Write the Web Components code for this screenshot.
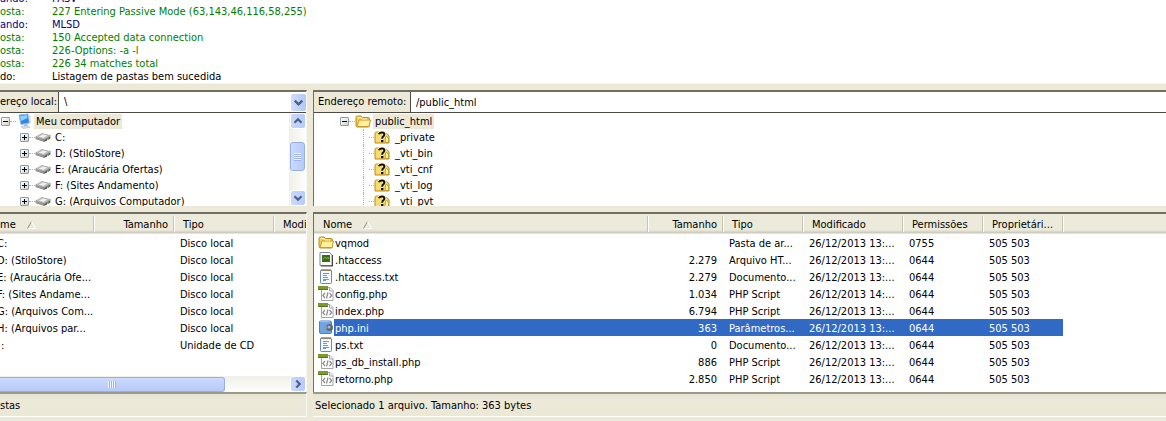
<!DOCTYPE html>
<html lang="pt-BR">
<head>
<meta charset="utf-8">
<title>FTP</title>
<style>
  html, body { margin: 0; height: 100%; }
  body { font: 11px/16px "DejaVu Sans Condensed", "Noto Sans", sans-serif; color: #000; background: #ece9d8; overflow: hidden; }
</style>
</head>
<body>
<ftp-window>
  <ftp-log slot="log">
    <log-line kind="cmd" label="ando:">PASV</log-line>
    <log-line kind="reply" label="osta:">227 Entering Passive Mode (63,143,46,116,58,255)</log-line>
    <log-line kind="cmd" label="ando:">MLSD</log-line>
    <log-line kind="reply" label="osta:">150 Accepted data connection</log-line>
    <log-line kind="reply" label="osta:">226-Options: -a -l</log-line>
    <log-line kind="reply" label="osta:">226 34 matches total</log-line>
    <log-line kind="state" label="do:">Listagem de pastas bem sucedida</log-line>
  </ftp-log>

  <site-pane slot="local" class="local">
    <address-bar slot="address" label="ereço local:" value="\" combo></address-bar>
    <tree-view slot="tree">
      <tree-node icon="computer" toggle="minus" selected>Meu computador</tree-node>
      <tree-node icon="drive" toggle="plus" level="1">C:</tree-node>
      <tree-node icon="drive" toggle="plus" level="1">D: (StiloStore)</tree-node>
      <tree-node icon="drive" toggle="plus" level="1">E: (Araucária Ofertas)</tree-node>
      <tree-node icon="drive" toggle="plus" level="1">F: (Sites Andamento)</tree-node>
      <tree-node icon="drive" toggle="plus" level="1">G: (Arquivos Computador)</tree-node>
      <xp-scrollbar slot="bar"></xp-scrollbar>
    </tree-view>
    <file-table slot="list" source="local"></file-table>
    <xp-scrollbar slot="hbar" horizontal></xp-scrollbar>
    <span slot="status">stas</span>
  </site-pane>

  <site-pane slot="remote" class="remote">
    <address-bar slot="address" label="Endereço remoto:" value="/public_html"></address-bar>
    <tree-view slot="tree" indent>
      <tree-node icon="folder" toggle="minus" selected>public_html</tree-node>
      <tree-node icon="unknown" level="1">_private</tree-node>
      <tree-node icon="unknown" level="1">_vti_bin</tree-node>
      <tree-node icon="unknown" level="1">_vti_cnf</tree-node>
      <tree-node icon="unknown" level="1">_vti_log</tree-node>
      <tree-node icon="unknown" level="1">_vti_pvt</tree-node>
    </tree-view>
    <file-table slot="list" source="remote"></file-table>
    <span slot="status">Selecionado 1 arquivo. Tamanho: 363 bytes</span>
  </site-pane>
</ftp-window>

<script>
const define = (name, html, setup) => {
  const template = document.createElement('template');
  template.innerHTML = html;
  customElements.define(name, class extends HTMLElement {
    constructor() {
      super();
      this.attachShadow({ mode: 'open' }).append(template.content.cloneNode(true));
    }
    connectedCallback() { if (setup) setup(this, this.shadowRoot); }
  });
};

const ICONS = {
  folder: `<path d="M1 4.5Q1 3 2.500 3H6L7.500 4.500H13Q14.500 4.500 14.500 6V12.500Q14.500 14 13 14H2.500Q1 14 1 12.500Z" fill="#f3cf5c" stroke="#b98a1c"/><path d="M2 13.500L4 7H15.500L14 13.500Z" fill="#fff1a0" stroke="#c79a2c"/><path d="M2.500 4.500H6L7 6H12" stroke="#fff3b5" fill="none"/>`,
  unknown: `<path d="M1 4.500Q1 3 2.500 3H6L7.500 4.500H13L15 7V14H1Z" fill="#f7dc6c" stroke="#b98a1c"/><path d="M11.500 6.500L14.500 9V13.500H11Z" fill="#fff3a8" stroke="#c79a2c"/><path d="M5 5.200Q5.500 3 8 3Q10.600 3 10.600 5.200Q10.600 6.700 9.200 7.500Q8.200 8.200 8.200 9.800" fill="none" stroke="#fff6b8" stroke-width="3.600"/><path d="M5 5.300Q5.500 3.400 8 3.400Q10.400 3.400 10.400 5.300Q10.400 6.600 9.200 7.400Q8.200 8.100 8.200 9.800" fill="none" stroke="#111" stroke-width="2"/><path d="M7 11h2.400v2.200H7z" fill="#111"/>`,
  computer: `<path d="M3 2L12 1L13.500 10L5 11.500Z" fill="#2f86e6" stroke="#8db8ea"/><path d="M4 3L11 2L11.500 5L5 8Z" fill="#8fd0ff"/><path d="M12.500 1.500L14.500 3L15 10L13.500 10.500Z" fill="#d5dce8"/><path d="M8 11.500L11 11L12 13L8 13.500Z" fill="#aebccd"/><path d="M5 13.500L12 12.500L14 14.500L7 15.500Z" fill="#d9e1ec" stroke="#9dabc0" stroke-width=".5"/>`,
  drive: `<path d="M0.500 8L7 4.500L15.500 6.500V9.500L9 13L0.500 10Z" fill="#8a8a8a"/><path d="M0.500 8L7 4.500L15.500 6.500L9 10.300Z" fill="#c4c4c4" stroke="#a5a5a5" stroke-width=".6"/><path d="M4 7.500L8 5.500L12 6.600L8.500 8.700Z" fill="#efefef"/><path d="M1 8.800L9 11.300V12.600L1 10Z" fill="#9a9a9a"/><path d="M9.500 11.300L15 8.300V9.500L9.500 12.600Z" fill="#444"/><path d="M12 10.500l1.500-.9" stroke="#8f8"/>`,
  htaccess: `<path d="M2 1.500H11.500L14 4V14.500H2Z" fill="#fff" stroke="#7d8692"/><path d="M14.500 4V15H3" fill="none" stroke="#444"/><path d="M4 4H12V11H4Z" fill="#3a6b18"/><path d="M5 8.500L7 6L8.500 8L10 6L11 8.500" stroke="#7fa83a" fill="none"/>`,
  text: `<path d="M2.500 3Q2.500 2 3.500 2H12.500Q13.500 2 13.500 3V14.500Q13.500 15.500 12.500 15.500H3.500Q2.500 15.500 2.500 14.500Z" fill="#f4f8ff" stroke="#7288ad"/><path d="M3 2.500H13M4 1v2M6 1v2M8 1v2M10 1v2M12 1v2" stroke="#8b866c"/><path d="M5 5.500H11M5 9.500H10M5 12.500H8" stroke="#6398d4"/><path d="M5 7.500H9M5 11.500H11" stroke="#6cac63"/>`,
  php: `<path d="M3.500 2.500H12L15 5.500V15.500H3.500Z" fill="#fff" stroke="#a4a4a4"/><path d="M11.500 2.500V6H15" fill="#eee" stroke="#aaa"/><path d="M0 1H10V5H0Z" fill="#7a9a2a"/><path d="M0 4H10V5H0Z" fill="#58761a"/><path d="M7 8L4.800 10.500L7 13M11.500 8L13.700 10.500L11.500 13M10 7.500L8.500 13.500" fill="none" stroke="#8b8b8b" stroke-width="1.200"/>`,
  ini: `<path d="M2.500 2H12Q13.500 2 13.500 3.500V13Q13.500 14.500 12 14.500H3Q1.500 14.500 1.500 13V3Q1.500 2 2.500 2Z" fill="#6ea3e4" stroke="#4c80c8"/><path d="M2 2.500H12M4 1.500v2M6 1.500v2M8 1.500v2M10 1.500v2" stroke="#9cbcec"/><circle cx="11.500" cy="8.500" r="3.500" fill="#5f6975"/><circle cx="11" cy="8" r="1.500" fill="#aab4c2"/><path d="M6 8L9 7V10L6 9.500Z" fill="#8d98a5"/>`
};

define('xp-icon', `
<style>
  :host { display: block; flex: none; width: 16px; height: 16px; }
  svg { display: block; width: 16px; height: 16px; }
</style><svg viewBox="0 0 16 16" aria-hidden="true"></svg>`,
(el, root) => { root.querySelector('svg').innerHTML = ICONS[el.getAttribute('name')] || ''; });

define('ftp-window', `
<style>
  :host { display: flex; flex-direction: column; height: 100vh; min-height: 380px; }
  .log { flex: 1 1 0; min-height: 0; display: flex; flex-direction: column; justify-content: flex-end; overflow: hidden; background: #fff; }
  .panes { flex: none; display: grid; grid-template-columns: 307px 1fr; column-gap: 6px; padding: 6px 0 4px; background: #ece9d8; border-top: 1px solid #f5f3ea; }
</style>
<div class="log"><slot name="log"></slot></div>
<div class="panes"><slot name="local"></slot><slot name="remote"></slot></div>`);

define('ftp-log', `
<style>:host { display: block; }</style><slot></slot>`);

define('log-line', `
<style>
  :host { display: grid; grid-template-columns: 52px 1fr; line-height: 13px; white-space: nowrap; color: #000; }
  :host([kind=cmd]) { color: #000080; }
  :host([kind=reply]) { color: #008000; }
</style><span class="label"></span><span><slot></slot></span>`,
(el, root) => { root.querySelector('.label').textContent = el.getAttribute('label'); });

define('site-pane', `
<style>
  :host { display: flex; flex-direction: column; min-width: 0; }
  .top, .list { border-top: 2px solid #716f64; background: #fff; }
  .top { margin-bottom: 6px; }
  :host(.local) .top, :host(.local) .list, :host(.local) .status { border-right: 1px solid #f8f7f1; }
  :host(.remote) .top, :host(.remote) .list { border-left: 1px solid #716f64; }
  .list { flex: 1; display: flex; flex-direction: column; justify-content: space-between; min-height: 178px; overflow: hidden; }
  .status { border-top: 2px solid #9d9a8a; border-bottom: 1px solid #fff; height: 22px; line-height: 24px; white-space: nowrap; background: linear-gradient(#e6e3d2, #ece9d8 6px, #ebe8d6); }
  :host(.remote) .status { padding-left: 2px; }
</style>
<div class="top"><slot name="address"></slot><slot name="tree"></slot></div>
<div class="list"><slot name="list"></slot><slot name="hbar"></slot></div>
<div class="status"><slot name="status"></slot></div>`);

const CHEVRON = d => `<svg viewBox="0 0 16 16" aria-hidden="true"><path d="${d}" fill="none" stroke="#4d6185" stroke-width="2.500"/></svg>`;
const DOWN = 'M4 6L8 10L12 6', UP = 'M4 10L8 6L12 10', RIGHT = 'M6 4L10 8L6 12';

define('address-bar', `
<style>
  :host { display: flex; height: 20px; border-bottom: 1px solid #4c4a42; background: #fff; }
  label { flex: none; line-height: 20px; background: #ece9d8; border-right: 1px solid #4c4a42; white-space: nowrap; box-sizing: border-box; width: 59px; }
  :host(:not([combo])) label { width: 97px; padding-left: 4px; }
  .field { flex: 1; min-width: 0; display: grid; align-items: center; }
  .field > * { grid-area: 1 / 1; }
  input, select { appearance: none; width: 100%; height: 20px; margin: 0; padding: 0 5px; border: 0; border-radius: 0; outline: 0; background: transparent; font: inherit; color: inherit; box-sizing: border-box; }
  svg { justify-self: end; width: 15px; height: 17px; pointer-events: none; background: linear-gradient(90deg, #cfdcfd, #b4c8f6); border-radius: 2px; }
</style>
<label for="path"></label><div class="field"></div>`,
(el, root) => {
  root.querySelector('label').textContent = el.getAttribute('label');
  const field = root.querySelector('.field'), value = el.getAttribute('value');
  if (el.hasAttribute('combo')) {
    field.innerHTML = `<select id="path"><option></option></select>${CHEVRON(DOWN)}`;
    field.querySelector('option').textContent = value;
  } else {
    field.innerHTML = `<input id="path" type="text">`;
    field.querySelector('input').value = value;
  }
});

define('tree-view', `
<style>
  :host { display: flex; height: 93px; overflow: hidden; background: #fff; }
  .nodes { flex: 1; min-width: 0; }
  :host([indent]) .nodes { padding-left: 25px; }
</style><div class="nodes" role="tree"><slot></slot></div><slot name="bar"></slot>`);

define('tree-node', `
<style>
  :host { display: flex; align-items: center; height: 16px; padding-left: 1px; white-space: nowrap; }
  :host([level]) { padding-left: 20px; }
  .box { flex: none; box-sizing: border-box; width: 9px; height: 9px; border: 1px solid #8c9cb3; border-radius: 1px; background: linear-gradient(135deg, #fff, #d8d2c4); }
  .box svg { display: block; width: 7px; height: 7px; }
  .dots { flex: none; width: 6px; border-top: 1px dotted #b0b0b0; }
  .text { padding: 0 4px 0 2px; margin-left: 2px; line-height: 15px; }
  :host([selected]) .text { background: #ece9d8; padding-right: 2px; }
  :host([level]:not([toggle])) .box { background: none; border-width: 0 0 0 1px; border-style: dotted; border-color: #b0b0b0; border-radius: 0; height: 16px; width: 6px; margin-left: 4px; }
  :host([level]:not([toggle])) .dots { width: 5px; }
  :host([level]:not([toggle])) .text { margin-left: 3px; }
</style>
<span class="box"></span><span class="dots"></span><span class="icon"></span><span class="text"><slot></slot></span>`,
(el, root) => {
  el.setAttribute('role', 'treeitem');
  root.querySelector('.icon').innerHTML = `<xp-icon name="${el.getAttribute('icon')}"></xp-icon>`;
  const toggle = el.getAttribute('toggle');
  if (toggle) root.querySelector('.box').innerHTML =
    `<svg viewBox="0 0 7 7"><path d="M1 3.500H6${toggle === 'plus' ? 'M3.500 1V6' : ''}" stroke="#000"/></svg>`;
});

define('xp-scrollbar', `
<style>
  :host { display: flex; flex-direction: column; flex: none; width: 17px; box-sizing: border-box; background: linear-gradient(90deg, #f0efe8, #fefefb); }
  :host([horizontal]) { flex-direction: row; width: auto; height: 16px; background: linear-gradient(#f0efe8, #fefefb); }
  button { flex: none; width: 16px; height: 16px; margin: 0 0 0 1px; padding: 0; border: 1px solid #fff; border-radius: 3px; background: linear-gradient(90deg, #cad8fc, #b7cafa); }
  svg { display: block; width: 14px; height: 14px; }
  .track { flex: 1; display: flex; flex-direction: column; align-items: center; }
  .thumb { box-sizing: border-box; width: 15px; height: 29px; margin-top: 13px; border: 1px solid #98b0e6; border-radius: 3px; background: linear-gradient(90deg, #cbdafd, #b6caf8); display: grid; place-items: center; }
  .grip { width: 7px; height: 8px; background: repeating-linear-gradient(#eef4fe 0 1px, #9db6ee 1px 2px); }
  :host([horizontal]) .track { flex-direction: row; }
  :host([horizontal]) .thumb { width: 78%; height: 15px; margin: 0; border-left: 0; border-radius: 0 3px 3px 0; background: linear-gradient(#cbdafd, #b6caf8); }
  :host([horizontal]) .grip { width: 8px; height: 7px; background: repeating-linear-gradient(90deg, #eef4fe 0 1px, #9db6ee 1px 2px); }
  :host([horizontal]) .back { display: none; }
</style>
<button class="back" aria-label="Recuar"></button>
<div class="track"><div class="thumb"><div class="grip"></div></div></div>
<button class="next" aria-label="Avançar"></button>`,
(el, root) => {
  root.querySelector('.back').innerHTML = CHEVRON(UP);
  root.querySelector('.next').innerHTML = CHEVRON(el.hasAttribute('horizontal') ? RIGHT : DOWN);
});

const TABLES = {
  local: {
    widths: [94, 80, 100, 80],
    heads: ['me', 'Tamanho', 'Tipo', 'Modi'],
    rows: [
      ['C:', '', 'Disco local', ''],
      ['D: (StiloStore)', '', 'Disco local', ''],
      ['E: (Araucária Ofe...', '', 'Disco local', ''],
      ['F: (Sites Andame...', '', 'Disco local', ''],
      ['G: (Arquivos Com...', '', 'Disco local', ''],
      ['H: (Arquivos par...', '', 'Disco local', ''],
      [':', '', 'Unidade de CD', '']
    ]
  },
  remote: {
    widths: [334, 75, 80, 100, 80, 80],
    heads: ['Nome', 'Tamanho', 'Tipo', 'Modificado', 'Permissões', 'Proprietári...'],
    icons: ['folder', 'htaccess', 'text', 'php', 'php', 'ini', 'text', 'php', 'php'],
    selected: 5,
    rows: [
      ['vqmod', '', 'Pasta de ar...', '26/12/2013 13:...', '0755', '505 503'],
      ['.htaccess', '2.279', 'Arquivo HT...', '26/12/2013 13:...', '0644', '505 503'],
      ['.htaccess.txt', '2.279', 'Documento...', '26/12/2013 13:...', '0644', '505 503'],
      ['config.php', '1.034', 'PHP Script', '26/12/2013 14:...', '0644', '505 503'],
      ['index.php', '6.794', 'PHP Script', '26/12/2013 13:...', '0644', '505 503'],
      ['php.ini', '363', 'Parâmetros...', '26/12/2013 13:...', '0644', '505 503'],
      ['ps.txt', '0', 'Documento...', '26/12/2013 13:...', '0644', '505 503'],
      ['ps_db_install.php', '886', 'PHP Script', '26/12/2013 13:...', '0644', '505 503'],
      ['retorno.php', '2.850', 'PHP Script', '26/12/2013 13:...', '0644', '505 503']
    ]
  }
};

define('file-table', `
<style>
  :host { display: block; background: linear-gradient(#ebeadb 0 16px, #e0ddce 17px, #d6d2c2 18px, #cbc7b8 19px, #fff 20px); overflow: hidden; }
  table { table-layout: fixed; border-collapse: collapse; width: 0; }
  th, td { padding: 0 6px; white-space: nowrap; font-weight: normal; text-align: left; }
  th { height: 20px; padding: 0 6px 0 9px; }
  th > span { display: flex; align-items: center; justify-content: space-between; height: 14px; margin-right: -6px; padding: 2px 5px 0 0; border-right: 1px solid #c7c5b2; box-shadow: 1px 0 #fff; }
  th.num > span { justify-content: flex-end; }
  td, .label { line-height: 15px; padding-top: 2px; }
  .num { text-align: right; }
  td:first-child { padding: 0; }
  .name { display: flex; }
  .name .label { flex: 1; padding-left: 1px; }
  .icon { flex: none; width: 16px; padding-left: 4px; }
  tr.selected td:not(:first-child), tr.selected .label { background: #316ac5; color: #fff; }
  th svg { width: 9px; height: 8px; margin-left: 11px; }
  th.sorted > span { justify-content: flex-start; }
  :host([source=local]) th:first-child { padding-left: 0; }
  :host([source=local]) .label { margin-left: -4px; }
  :host([source=local]) tr:last-child .label { margin-left: 0; }
</style>
<table><colgroup></colgroup><thead><tr></tr></thead><tbody></tbody></table>`,
(el, root) => {
  const data = TABLES[el.getAttribute('source')];
  const table = root.querySelector('table');
  table.style.width = data.widths.reduce((a, b) => a + b) + 'px';
  root.querySelector('colgroup').innerHTML = data.widths.map(w => `<col style="width:${w}px">`).join('');
  const arrow = `<svg viewBox="0 0 9 8" aria-hidden="true"><path d="M0.500 7.500L4.500 0.500" stroke="#8f8d80" fill="none"/><path d="M4.500 0.500L8.500 7.500H1" stroke="#fff" fill="none"/></svg>`;
  root.querySelector('thead tr').innerHTML = data.heads.map((h, i) =>
    `<th scope="col" class="${i === 1 ? 'num' : i === 0 ? 'sorted' : ''}"><span>${h}${i === 0 ? arrow : ''}</span></th>`).join('');
  root.querySelector('tbody').innerHTML = data.rows.map((r, n) =>
    `<tr class="${n === data.selected ? 'selected' : ''}">` + r.map((c, i) => i === 0
      ? `<td><div class="name">${data.icons ? `<span class="icon"><xp-icon name="${data.icons[n]}"></xp-icon></span>` : ''}<span class="label">${c}</span></div></td>`
      : `<td class="${i === 1 ? 'num' : ''}">${c}</td>`).join('') + '</tr>').join('');
});
</script>
</body>
</html>
